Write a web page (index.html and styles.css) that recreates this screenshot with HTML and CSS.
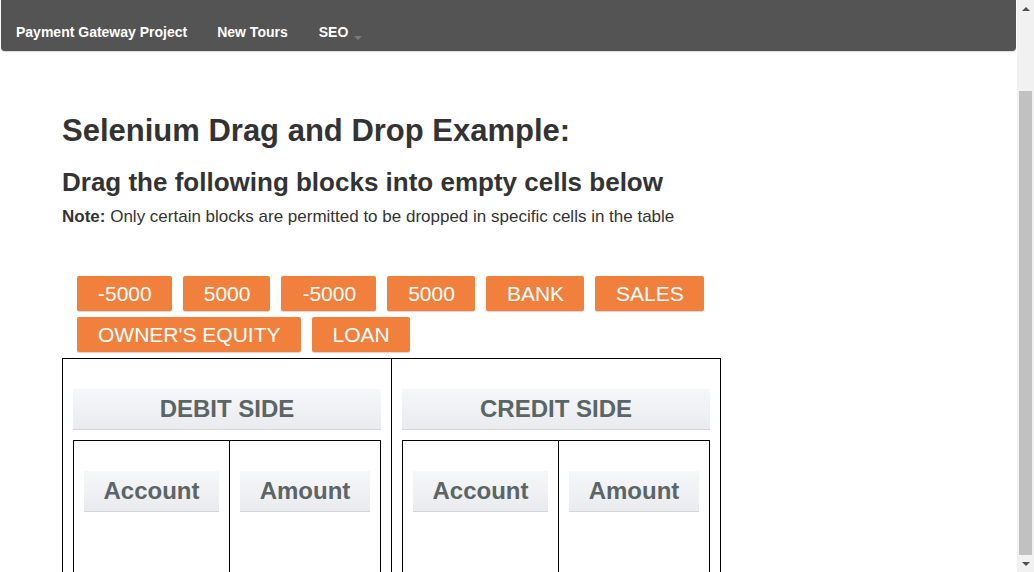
FILE: index.html
```html
<!DOCTYPE html>
<html>
<head>
<meta charset="utf-8">
<title>Selenium Drag and Drop Example</title>
<link rel="stylesheet" href="styles.css">
</head>
<body>
<div class="page">
  <div class="main">
    <nav class="navbar">
      <a class="nav-link">Payment Gateway Project</a>
      <a class="nav-link">New Tours</a>
      <a class="nav-link seo">SEO <span class="caret"></span></a>
    </nav>
    <div class="content">
      <h2 class="title">Selenium Drag and Drop Example:</h2>
      <h3 class="subtitle">Drag the following blocks into empty cells below</h3>
      <p class="note"><b>Note:</b> Only certain blocks are permitted to be dropped in specific cells in the table</p>
      <div class="blocks">
        <span class="block">-5000</span>
        <span class="block">5000</span>
        <span class="block">-5000</span>
        <span class="block">5000</span>
        <span class="block">BANK</span>
        <span class="block">SALES</span>
        <span class="block">OWNER'S EQUITY</span>
        <span class="block">LOAN</span>
      </div>
      <table class="ledger">
        <tr>
          <td class="side">
            <div class="side-head">DEBIT SIDE</div>
            <table class="inner">
              <tr>
                <td class="inner-cell first"><div class="col-head">Account</div></td>
                <td class="inner-cell"><div class="col-head">Amount</div></td>
              </tr>
            </table>
          </td>
          <td class="side">
            <div class="side-head">CREDIT SIDE</div>
            <table class="inner">
              <tr>
                <td class="inner-cell first"><div class="col-head">Account</div></td>
                <td class="inner-cell"><div class="col-head">Amount</div></td>
              </tr>
            </table>
          </td>
        </tr>
      </table>
    </div>
  </div>
  <div class="scrollbar">
    <div class="sb-btn"><span class="arrow-up"></span></div>
    <div class="sb-track"><div class="sb-thumb"></div></div>
    <div class="sb-btn"><span class="arrow-down"></span></div>
  </div>
</div>
</body>
</html>
```

FILE: styles.css
```css
html, body {
  margin: 0;
  padding: 0;
  height: 100%;
  overflow: hidden;
  background: #fff;
  font-family: "Liberation Sans", Arial, sans-serif;
  color: #333;
}

.page {
  display: flex;
  height: 100%;
}

.main {
  flex: 1;
  min-width: 0;
  overflow: hidden;
}

.navbar {
  display: flex;
  align-items: center;
  height: 51px;
  margin: 0 1px;
  padding: 0 0 0 1px;
  background: #545454;
  border-radius: 0 0 4px 4px;
  box-shadow: 0 1px 1px rgba(0,0,0,0.15);
}

.nav-link {
  color: #fff;
  font-weight: bold;
  font-size: 14px;
  padding: 13px 15px 0 14px;
  line-height: 20px;
  white-space: nowrap;
}
.nav-link + .nav-link { padding-left: 15px; }
.nav-link.seo { padding-left: 16px; }

.caret {
  display: inline-block;
  width: 0;
  height: 0;
  margin-left: 2px;
  vertical-align: -3px;
  border-top: 4px solid #7a7a7a;
  border-left: 4px solid transparent;
  border-right: 4px solid transparent;
}

.content {
  padding-left: 62px;
}

.title {
  margin: 63px 0 0;
  font-size: 31px;
  line-height: 33px;
  font-weight: bold;
}

.subtitle {
  margin: 21px 0 0;
  font-size: 26px;
  line-height: 28px;
  font-weight: bold;
}

.note {
  margin: 10px 0 0;
  font-size: 17px;
  line-height: 22px;
}

.blocks {
  display: flex;
  flex-wrap: wrap;
  gap: 6px 11px;
  width: 643px;
  margin: 48px 0 0 15px;
}

.block {
  display: inline-block;
  height: 35px;
  line-height: 35px;
  padding: 0 20px 0 21px;
  background: #f0803c;
  color: #fff;
  font-size: 21px;
  border-radius: 2px;
  box-shadow: 0 1px 1px rgba(0,0,0,0.18);
}

.ledger {
  margin-top: 6px;
  width: 659px;
  border-collapse: collapse;
  table-layout: fixed;
}

.side {
  border: 1px solid #000;
  padding: 30px 10px 0;
  vertical-align: top;
}

.side-head {
  height: 40px;
  line-height: 40px;
  text-align: center;
  font-size: 24px;
  font-weight: bold;
  color: #5b6566;
  background: linear-gradient(#f6f7f9, #e9ebee);
  border-bottom: 1px solid #d4d6d9;
  margin-bottom: 10px;
}

.inner {
  width: 100%;
  border-collapse: collapse;
  table-layout: fixed;
}

.inner-cell {
  border: 1px solid #000;
  padding: 30px 10px 0;
  height: 140px;
  vertical-align: top;
}

.inner-cell.first {
  width: 135px;
}

.col-head {
  height: 40px;
  line-height: 40px;
  text-align: center;
  font-size: 24px;
  font-weight: bold;
  color: #5b6566;
  background: linear-gradient(#f6f7f9, #e9ebee);
  border-bottom: 1px solid #d4d6d9;
}

.scrollbar {
  width: 17px;
  flex: none;
  display: flex;
  flex-direction: column;
  background: #f1f1f1;
}

.sb-btn {
  height: 17px;
  display: flex;
  align-items: center;
  justify-content: center;
}

.arrow-up {
  width: 0;
  height: 0;
  border-bottom: 4px solid #505050;
  border-left: 4px solid transparent;
  border-right: 4px solid transparent;
}

.arrow-down {
  width: 0;
  height: 0;
  border-top: 4px solid #505050;
  border-left: 4px solid transparent;
  border-right: 4px solid transparent;
}

.sb-track {
  flex: 1;
  padding: 74px 2px 0;
  display: flex;
  flex-direction: column;
}

.sb-thumb {
  flex: 1;
  background: #c1c1c1;
}
```
